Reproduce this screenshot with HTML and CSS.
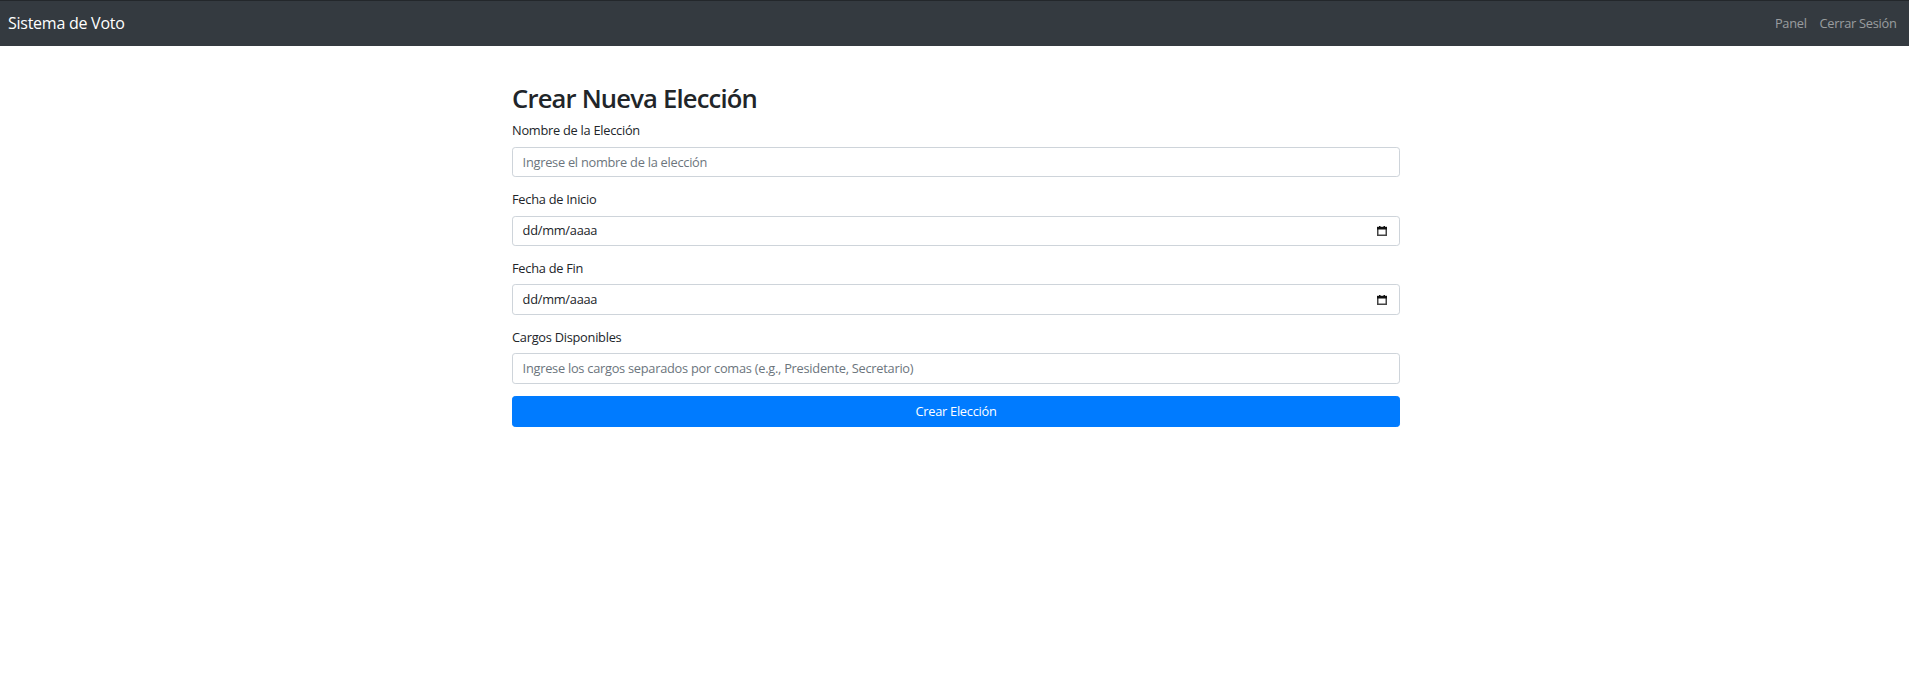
FILE: index.html
```html
<!DOCTYPE html>
<html lang="es">
<head>
<meta charset="utf-8">
<title>Sistema de Voto</title>
<link rel="stylesheet" href="styles.css">
</head>
<body>
<nav class="navbar">
  <a class="brand" href="#">Sistema de Voto</a>
  <ul class="nav-links">
    <li><a href="#">Panel</a></li>
    <li><a href="#">Cerrar Sesión</a></li>
  </ul>
</nav>
<main class="container">
  <h2 class="title">Crear Nueva Elección</h2>
  <form class="form">
    <div class="form-group">
      <label for="nombre">Nombre de la Elección</label>
      <input id="nombre" class="form-control" type="text" placeholder="Ingrese el nombre de la elección">
    </div>
    <div class="form-group">
      <label>Fecha de Inicio</label>
      <div class="form-control date-control">
        <span class="date-text">dd/mm/aaaa</span>
        <svg class="cal-icon" width="10" height="10" viewBox="0 0 10 10"><rect x="0.75" y="1.5" width="8.5" height="7.75" fill="none" stroke="#444" stroke-width="1.5"/><rect x="0" y="1" width="10" height="2.5" fill="#111"/><rect x="2" y="0" width="1.5" height="2" fill="#111"/><rect x="6.5" y="0" width="1.5" height="2" fill="#111"/></svg>
      </div>
    </div>
    <div class="form-group">
      <label>Fecha de Fin</label>
      <div class="form-control date-control">
        <span class="date-text">dd/mm/aaaa</span>
        <svg class="cal-icon" width="10" height="10" viewBox="0 0 10 10"><rect x="0.75" y="1.5" width="8.5" height="7.75" fill="none" stroke="#444" stroke-width="1.5"/><rect x="0" y="1" width="10" height="2.5" fill="#111"/><rect x="2" y="0" width="1.5" height="2" fill="#111"/><rect x="6.5" y="0" width="1.5" height="2" fill="#111"/></svg>
      </div>
    </div>
    <div class="form-group">
      <label for="cargos">Cargos Disponibles</label>
      <input id="cargos" class="form-control" type="text" placeholder="Ingrese los cargos separados por comas (e.g., Presidente, Secretario)">
    </div>
    <button type="button" class="btn-primary">Crear Elección</button>
  </form>
</main>
</body>
</html>
```

FILE: styles.css
```css
* { box-sizing: border-box; }

html, body {
  margin: 0;
  padding: 0;
}

body {
  font-family: "Open Sans", "Noto Sans", sans-serif;
  font-size: 12.8px;
  line-height: 1.5;
  letter-spacing: -0.02em;
  color: #212529;
  background: #fff;
}

.navbar {
  display: flex;
  align-items: center;
  justify-content: space-between;
  background: #343a40;
  border-top: 1px solid #23272b;
  padding: 6.4px 6px 6.4px 8px;
}

.brand {
  color: #fff;
  text-decoration: none;
  font-size: 16px;
  line-height: 1.5;
  padding: 4px 0;
}

.nav-links {
  display: flex;
  list-style: none;
  margin: 0;
  padding: 0;
}

.nav-links a {
  display: block;
  color: rgba(255, 255, 255, 0.5);
  text-decoration: none;
  padding: 6.4px 6.4px;
}

.container {
  max-width: 912px;
  margin: 38.4px auto 0;
  padding: 0 10.5px 0 13.5px;
}

.title {
  font-size: 25.6px;
  font-weight: 600;
  line-height: 1.2;
  letter-spacing: -0.032em;
  margin: 0 0 6.4px;
}

.form-group {
  margin-bottom: 12.8px;
}

.form-group label {
  display: inline-block;
  margin-bottom: 6.4px;
}

.form-control {
  display: block;
  width: 100%;
  height: 30.4px;
  padding: 4.8px 9.6px;
  font-family: inherit;
  font-size: 12.8px;
  line-height: 1.5;
  letter-spacing: inherit;
  color: #495057;
  background: #fff;
  border: 1px solid #ced4da;
  border-radius: 3.2px;
}

.form-control::placeholder {
  color: #6c757d;
  opacity: 1;
}

.date-control {
  display: flex;
  align-items: center;
  justify-content: space-between;
  padding-right: 12px;
}

.date-text {
  color: #212529;
}

.cal-icon {
  flex: none;
}

.btn-primary {
  display: block;
  width: 100%;
  padding: 4.8px 9.6px;
  font-family: inherit;
  font-size: 12.8px;
  line-height: 1.5;
  letter-spacing: inherit;
  color: #fff;
  background: #007bff;
  border: 1px solid #007bff;
  border-radius: 3.2px;
  text-align: center;
  cursor: pointer;
}
```
